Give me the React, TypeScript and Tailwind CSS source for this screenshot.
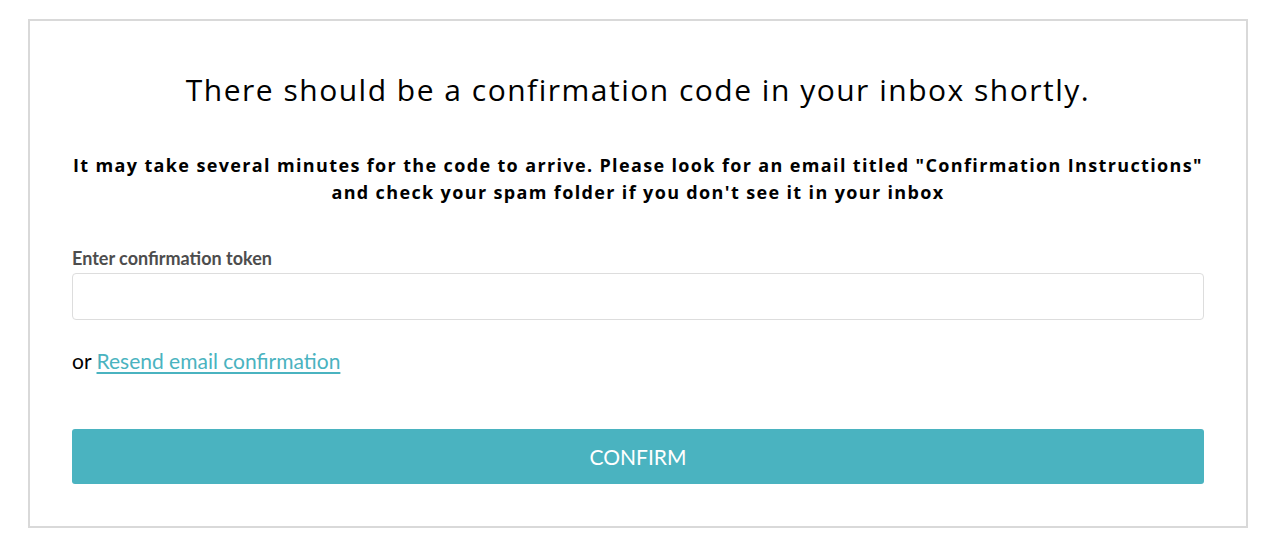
export default function App() {
  return (
    <div className="bg-white min-h-[553px] pt-[19px]">
      <div className="ml-[28px] w-[1220px] border-2 border-[#d9d9d9] bg-white px-[42px] pt-[51px] pb-[42px]">
        <h1 className="text-center text-[30px] leading-[36px] font-normal text-black tracking-[1.5px] font-['Open_Sans',sans-serif]">
          There should be a confirmation code in your inbox shortly.
        </h1>
        <p className="-mx-[20px] mt-[44px] text-center text-[18px] leading-[27px] font-bold text-black tracking-[1.36px] whitespace-nowrap font-['Open_Sans',sans-serif]">
          It may take several minutes for the code to arrive. Please look for an email titled "Confirmation Instructions"
          <br />
          and check your spam folder if you don't see it in your inbox
        </p>
        <label className="mt-[41px] block text-[18px] leading-[22px] font-bold text-[#4d4d4d] font-['Lato',sans-serif]">
          Enter confirmation token
        </label>
        <input
          type="text"
          className="mt-[4px] block h-[47px] w-full rounded-[4px] border border-[#dddddd] bg-white px-3 outline-none"
        />
        <p className="mt-[29px] text-[21px] leading-[24px] text-black font-['Lato',sans-serif]">
          or{" "}
          <a href="#" className="text-[#4ab3c0] underline underline-offset-[3px]">
            Resend email confirmation
          </a>
        </p>
        <button className="mt-[56px] block h-[55px] w-full rounded-[3px] bg-[#4ab3c0] text-[21px] text-white font-['Lato',sans-serif]">
          CONFIRM
        </button>
      </div>
    </div>
  );
}
